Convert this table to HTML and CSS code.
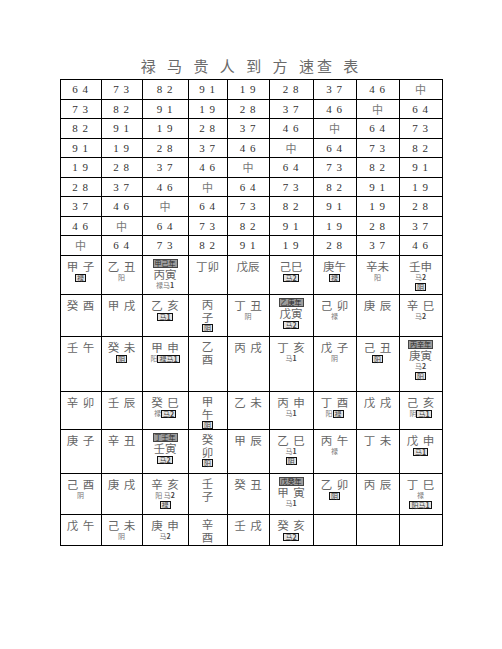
FILE: index.html
```html
<!DOCTYPE html>
<html lang="zh">
<head>
<meta charset="utf-8">
<title>禄马贵人到方速查表</title>
<link rel="stylesheet" href="styles.css">
</head>
<body>
<div class="page">
  <h1 class="title">禄 马 贵 人 到 方 速查 表</h1>
  <table class="grid">
    <colgroup>
      <col class="c1"><col class="c2"><col class="c3"><col class="c4"><col class="c5"><col class="c6"><col class="c7"><col class="c8"><col class="c9">
    </colgroup>
    <tbody>
      <tr class="num"><td>6 4</td><td>7 3</td><td>8 2</td><td>9 1</td><td>1 9</td><td>2 8</td><td>3 7</td><td>4 6</td><td class="z">中</td></tr>
      <tr class="num"><td>7 3</td><td>8 2</td><td>9 1</td><td>1 9</td><td>2 8</td><td>3 7</td><td>4 6</td><td class="z">中</td><td>6 4</td></tr>
      <tr class="num"><td>8 2</td><td>9 1</td><td>1 9</td><td>2 8</td><td>3 7</td><td>4 6</td><td class="z">中</td><td>6 4</td><td>7 3</td></tr>
      <tr class="num"><td>9 1</td><td>1 9</td><td>2 8</td><td>3 7</td><td>4 6</td><td class="z">中</td><td>6 4</td><td>7 3</td><td>8 2</td></tr>
      <tr class="num"><td>1 9</td><td>2 8</td><td>3 7</td><td>4 6</td><td class="z">中</td><td>6 4</td><td>7 3</td><td>8 2</td><td>9 1</td></tr>
      <tr class="num"><td>2 8</td><td>3 7</td><td>4 6</td><td class="z">中</td><td>6 4</td><td>7 3</td><td>8 2</td><td>9 1</td><td>1 9</td></tr>
      <tr class="num"><td>3 7</td><td>4 6</td><td class="z">中</td><td>6 4</td><td>7 3</td><td>8 2</td><td>9 1</td><td>1 9</td><td>2 8</td></tr>
      <tr class="num"><td>4 6</td><td class="z">中</td><td>6 4</td><td>7 3</td><td>8 2</td><td>9 1</td><td>1 9</td><td>2 8</td><td>3 7</td></tr>
      <tr class="num"><td class="z">中</td><td>6 4</td><td>7 3</td><td>8 2</td><td>9 1</td><td>1 9</td><td>2 8</td><td>3 7</td><td>4 6</td></tr>

      <tr class="big ra">
        <td><div class="m">甲 子</div><div class="s"><span class="b">禄</span></div></td>
        <td><div class="m">乙 丑</div><div class="s">阳</div></td>
        <td><div class="s"><span class="h">甲己年</span></div><div class="m t">丙寅</div><div class="s">禄马<b>1</b></div></td>
        <td><div class="m">丁卯</div></td>
        <td><div class="m">戊辰</div></td>
        <td><div class="m">己巳</div><div class="s"><span class="b">马<b>2</b></span></div></td>
        <td><div class="m">庚午</div><div class="s"><span class="b">禄</span></div></td>
        <td><div class="m">辛未</div><div class="s">阳</div></td>
        <td><div class="m">壬申</div><div class="s">马<b>2</b></div><div class="s"><span class="b">阴</span></div></td>
      </tr>
      <tr class="big rb">
        <td><div class="m">癸 酉</div></td>
        <td><div class="m">甲 戌</div></td>
        <td><div class="m">乙 亥</div><div class="s"><span class="b">马<b>1</b></span></div></td>
        <td><div class="m v">丙<br>子</div><div class="s"><span class="b">阴</span></div></td>
        <td><div class="m">丁 丑</div><div class="s">阴</div></td>
        <td><div class="s"><span class="h">乙庚年</span></div><div class="m t">戊寅</div><div class="s"><span class="b">马<b>2</b></span></div></td>
        <td><div class="m">己 卯</div><div class="s">禄</div></td>
        <td><div class="m">庚 辰</div></td>
        <td><div class="m">辛 巳</div><div class="s">马<b>2</b></div></td>
      </tr>
      <tr class="big rc">
        <td><div class="m">壬 午</div></td>
        <td><div class="m">癸 未</div><div class="s"><span class="b">阴</span></div></td>
        <td><div class="m">甲 申</div><div class="s">阳<span class="b">禄马<b>1</b></span></div></td>
        <td><div class="m v">乙<br>酉</div></td>
        <td><div class="m">丙 戌</div></td>
        <td><div class="m">丁 亥</div><div class="s">马<b>1</b></div></td>
        <td><div class="m">戊 子</div><div class="s">阴</div></td>
        <td><div class="m">己 丑</div><div class="s"><span class="b">阳</span></div></td>
        <td><div class="s"><span class="h">丙辛年</span></div><div class="m t">庚寅</div><div class="s">马<b>2</b></div><div class="s"><span class="b">阳</span></div></td>
      </tr>
      <tr class="big rd">
        <td><div class="m">辛 卯</div></td>
        <td><div class="m">壬 辰</div></td>
        <td><div class="m">癸 巳</div><div class="s">禄<span class="b">马<b>2</b></span></div></td>
        <td><div class="m v">甲<br>午</div><div class="s"><span class="b">阴</span></div></td>
        <td><div class="m">乙 未</div></td>
        <td><div class="m">丙 申</div><div class="s">马<b>1</b></div></td>
        <td><div class="m">丁 酉</div><div class="s">阳<span class="b">禄</span></div></td>
        <td><div class="m">戊 戌</div></td>
        <td><div class="m">己 亥</div><div class="s">阴<span class="b">马<b>1</b></span></div></td>
      </tr>
      <tr class="big re">
        <td><div class="m">庚 子</div></td>
        <td><div class="m">辛 丑</div></td>
        <td><div class="s"><span class="h">丁壬年</span></div><div class="m t">壬寅</div><div class="s"><span class="b">马<b>2</b></span></div></td>
        <td><div class="m v">癸<br>卯</div><div class="s"><span class="b">阳</span></div></td>
        <td><div class="m">甲 辰</div></td>
        <td><div class="m">乙 巳</div><div class="s">马<b>1</b></div><div class="s"><span class="b">阴</span></div></td>
        <td><div class="m">丙 午</div><div class="s">禄</div></td>
        <td><div class="m">丁 未</div></td>
        <td><div class="m">戊 申</div><div class="s"><span class="b">马<b>1</b></span></div></td>
      </tr>
      <tr class="big rf">
        <td><div class="m">己 酉</div><div class="s">阴</div></td>
        <td><div class="m">庚 戌</div></td>
        <td><div class="m">辛 亥</div><div class="s">阳 马<b>2</b></div><div class="s"><span class="b">禄</span></div></td>
        <td><div class="m v">壬<br>子</div></td>
        <td><div class="m">癸 丑</div></td>
        <td><div class="s"><span class="h">戊癸年</span></div><div class="m t">甲 寅</div><div class="s">马<b>1</b></div></td>
        <td><div class="m">乙 卯</div><div class="s"><span class="b">阴</span></div></td>
        <td><div class="m">丙 辰</div></td>
        <td><div class="m">丁 巳</div><div class="s">禄</div><div class="s"><span class="b">阳马<b>1</b></span></div></td>
      </tr>
      <tr class="big rg">
        <td><div class="m">戊 午</div></td>
        <td><div class="m">己 未</div><div class="s">阴</div></td>
        <td><div class="m">庚 申</div><div class="s">马<b>2</b></div></td>
        <td><div class="m v">辛<br>酉</div></td>
        <td><div class="m">壬 戌</div></td>
        <td><div class="m">癸 亥</div><div class="s"><span class="b">马<b>2</b></span></div></td>
        <td></td>
        <td></td>
        <td></td>
      </tr>
    </tbody>
  </table>
</div>
</body>
</html>
```

FILE: styles.css
```css
* { box-sizing: border-box; }

body {
  margin: 0;
  background: #ffffff;
  font-family: "Noto Sans CJK SC", sans-serif;
  color: #666666;
}

.page {
  width: 502px;
  padding-top: 56px;
}

.title {
  margin: 0;
  height: 23px;
  font-size: 15px;
  line-height: 20px;
  font-weight: normal;
  text-align: center;
  letter-spacing: 3px;
  word-spacing: 2px;
  color: #6a6a6a;
}

.grid {
  border-collapse: collapse;
  table-layout: fixed;
  width: 382px;
  margin: 0 auto;
}

.c1 { width: 41px; }
.c2 { width: 41px; }
.c3 { width: 46px; }
.c4 { width: 39px; }
.c5 { width: 42px; }
.c6 { width: 44px; }
.c7 { width: 43px; }
.c8 { width: 43px; }
.c9 { width: 43px; }

.grid td {
  border: 1px solid #000000;
  padding: 0;
  text-align: center;
  vertical-align: top;
}

.num td {
  height: 19.5px;
  vertical-align: middle;
  font-family: "Liberation Serif", serif;
  font-size: 11px;
  letter-spacing: 1px;
  color: #333333;
}

.num td.z {
  font-family: "Noto Sans CJK SC", sans-serif;
  font-size: 11px;
  letter-spacing: 0;
  color: #777777;
}

.big td { padding-top: 3px; }

.ra { height: 39.5px; }
.rb { height: 42px; }
.rc { height: 55px; }
.rd { height: 36px; }
.re { height: 44px; }
.rf { height: 41px; }
.rg { height: 31px; }

.m {
  font-size: 11.5px;
  line-height: 14px;
  word-spacing: 2px;
  color: #666666;
}

.m.t { line-height: 13px; }
.m.v { line-height: 12.5px; }

.s {
  height: 9px;
  font-size: 7px;
  line-height: 9px;
  color: #777777;
}

.s b { font-weight: bold; color: #444444; }

.b {
  display: inline-block;
  vertical-align: top;
  margin-top: 1px;
  border: 1px solid #111111;
  background: #e4e4e4;
  color: #444444;
  line-height: 6px;
  padding: 0 1px;
}

.h {
  display: inline-block;
  vertical-align: top;
  border: 1px solid #444444;
  background: #9c9c9c;
  color: #2a2a2a;
  line-height: 7px;
  padding: 0 1px;
}
```
